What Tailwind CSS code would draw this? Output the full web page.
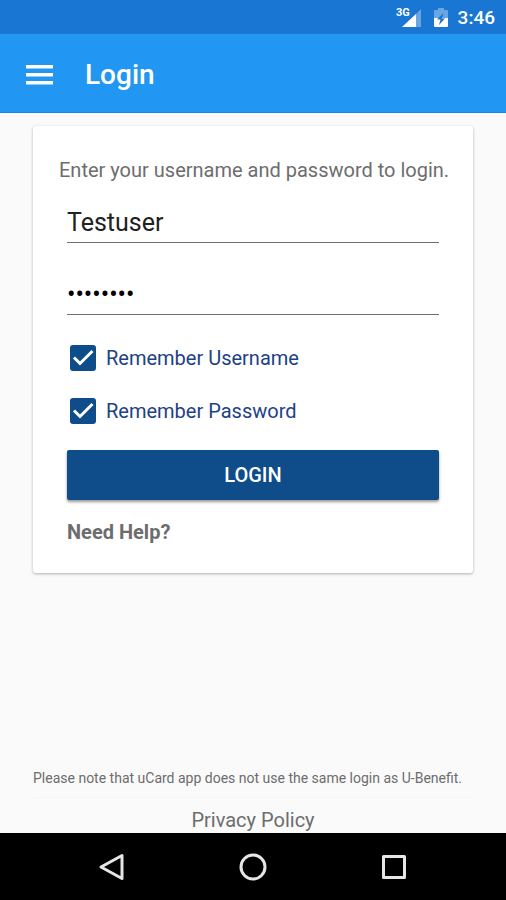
<!DOCTYPE html>
<html lang="en">
<head>
<meta charset="utf-8">
<meta name="viewport" content="width=device-width, initial-scale=1">
<title>Login</title>
<script src="https://cdn.jsdelivr.net/npm/@tailwindcss/browser@4"></script>
</head>
<body class="flex min-h-screen flex-col bg-[#fafafa] font-['Roboto',sans-serif] text-[#6d6d6d]">
  <div class="flex h-[34px] items-center justify-end bg-[#1976d2] pt-[2px] pr-[11px] text-white">
    <svg class="mr-[10px] h-6 w-[28px]" viewBox="0 0 28 24" role="img" aria-label="3G signal">
      <path d="M25 3V21H7z" fill="#fff" fill-opacity=".35"/>
      <path d="M20 8V21H6z" fill="#fff"/>
      <text x="0" y="10" font-size="11" font-weight="700" fill="#fff">3G</text>
    </svg>
    <svg class="mr-[10px] h-6 w-[14px]" viewBox="0 0 14 24" role="img" aria-label="Battery charging">
      <path d="M4 2h6v2h3q1 0 1 1v7H0V5q0-1 1-1h3z" fill="#fff" fill-opacity=".35"/>
      <path d="M0 12h14v8q0 1-1 1H1q-1 0-1-1z" fill="#fff"/>
      <path d="M9.500 7L3 13.500h3.500L5 19L11 12.500H8z" fill="#1976d2"/>
    </svg>
    <span class="text-[19px] leading-6 font-medium">3:46</span>
  </div>
  <header class="flex h-[79px] items-center border-b border-[#1b82e0] bg-[#2196f3] pt-[3px] pl-[26px] text-white">
    <button type="button" aria-label="Open menu" class="mr-8">
      <svg class="h-[20px] w-[27px]" viewBox="0 0 27 20" fill="#fff"><path d="M0 0h27v3.500H0zM0 8h27v3.500H0zM0 16h27v3.500H0z"/></svg>
    </button>
    <h1 class="text-[28px] leading-8 font-medium">Login</h1>
  </header>
  <main class="flex flex-1 flex-col px-[33px] pt-[13px]">
    <form class="flex flex-col rounded-[3px] bg-white px-[34px] pt-[28px] pb-[28px] shadow-[0_1px_3px_rgba(0,0,0,0.3)]">
      <p class="-mx-2 text-center text-[20px] leading-8 whitespace-nowrap">Enter your username and password to login.</p>
      <input type="text" value="Testuser" aria-label="Username" class="mt-4 h-[41px] w-full border-b border-[#6f6f6f] bg-transparent text-[25px] text-[#212121] outline-none">
      <input type="password" value="Testuser" aria-label="Password" class="mt-[31px] h-[41px] w-full border-b border-[#6f6f6f] bg-transparent text-[25px] text-black outline-none">
      <div class="mt-[30px] flex flex-col gap-[27px] pl-[3px] text-[20px] leading-[26px] text-[#1d4285]">
        <label class="flex items-center gap-[10px]">
          <span class="grid size-[26px]">
            <input type="checkbox" checked class="col-start-1 row-start-1 size-[26px] appearance-none rounded-[3px] bg-[#0f4c8a]">
            <svg class="pointer-events-none col-start-1 row-start-1 size-[26px]" viewBox="0 0 26 26" fill="none" stroke="#fff" stroke-width="3"><path d="M4 12.500L10 18.500L22.500 6"/></svg>
          </span>
          Remember Username
        </label>
        <label class="flex items-center gap-[10px]">
          <span class="grid size-[26px]">
            <input type="checkbox" checked class="col-start-1 row-start-1 size-[26px] appearance-none rounded-[3px] bg-[#0f4c8a]">
            <svg class="pointer-events-none col-start-1 row-start-1 size-[26px]" viewBox="0 0 26 26" fill="none" stroke="#fff" stroke-width="3"><path d="M4 12.500L10 18.500L22.500 6"/></svg>
          </span>
          Remember Password
        </label>
      </div>
      <button type="button" class="mt-[26px] h-[50px] rounded-[2px] bg-[#0f4c8a] text-[20px] font-medium text-white shadow-[0_2px_3px_rgba(0,0,0,0.4)]">LOGIN</button>
      <a href="#" class="mt-[19px] self-start text-[20px] leading-[26px] font-bold">Need Help?</a>
    </form>
    <div class="mt-auto">
      <p class="border-b border-[#f4f4f4] pb-[9px] text-[14px] leading-5 whitespace-nowrap">Please note that uCard app does not use the same login as U-Benefit.</p>
      <a href="#" class="mt-[9px] block text-center text-[20px] leading-[26px]">Privacy Policy</a>
    </div>
  </main>
  <nav class="flex h-[67px] items-center justify-center gap-[113px] bg-black">
    <button type="button" aria-label="Back"><svg class="size-7" viewBox="0 0 28 28" fill="none" stroke="#e6e6e6" stroke-width="3" stroke-linejoin="round"><path d="M24 2.500V25.500L3 14z"/></svg></button>
    <button type="button" aria-label="Home"><svg class="size-7" viewBox="0 0 28 28" fill="none" stroke="#e6e6e6" stroke-width="3"><circle cx="14" cy="14" r="12"/></svg></button>
    <button type="button" aria-label="Recent apps"><svg class="size-7" viewBox="0 0 28 28" fill="none" stroke="#e6e6e6" stroke-width="3" stroke-linejoin="round"><path d="M3.500 3.500h21v21h-21z"/></svg></button>
  </nav>
</body>
</html>
